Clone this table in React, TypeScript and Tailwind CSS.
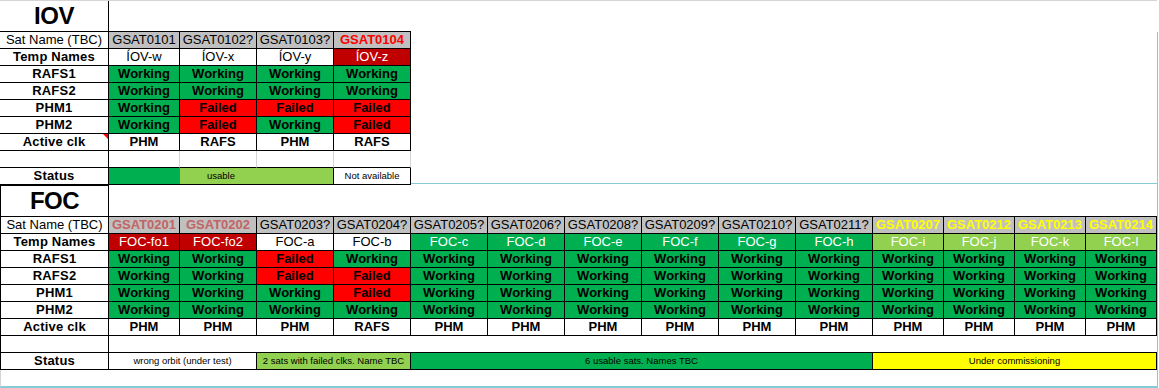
import type { ReactNode } from 'react'

type Tone = 'plain' | 'red' | 'rose' | 'yellow'
type Fill = 'white' | 'dred' | 'green' | 'lgreen'
type Sat = { name: string; tone: Tone; temp: string; fill: Fill; w: string; clocks: string[]; active: string }

const W = 'Working'
const F = 'Failed'

const toneClass: Record<Tone, string> = {
  plain: 'text-black',
  red: 'text-[#ff0000] font-bold',
  rose: 'text-[#c26464] font-bold',
  yellow: 'text-[#ffff00] font-bold',
}

const fillClass: Record<Fill, string> = {
  white: 'bg-white text-black',
  dred: 'bg-[#c00000] text-white',
  green: 'bg-[#00b050] text-white',
  lgreen: 'bg-[#92d050] text-white',
}

const IOV: Sat[] = [
  { name: 'GSAT0101', tone: 'plain', temp: 'ÍOV-w', fill: 'white', w: 'w-[71px]', clocks: [W, W, W, W], active: 'PHM' },
  { name: 'GSAT0102?', tone: 'plain', temp: 'ÍOV-x', fill: 'white', w: 'w-[77px]', clocks: [W, W, F, F], active: 'RAFS' },
  { name: 'GSAT0103?', tone: 'plain', temp: 'ÍOV-y', fill: 'white', w: 'w-[77px]', clocks: [W, W, F, W], active: 'PHM' },
  { name: 'GSAT0104', tone: 'red', temp: 'ÍOV-z', fill: 'dred', w: 'w-[77px]', clocks: [W, W, F, F], active: 'RAFS' },
]

const FOC: Sat[] = [
  { name: 'GSAT0201', tone: 'rose', temp: 'FOC-fo1', fill: 'dred', w: 'w-[71px]', clocks: [W, W, W, W], active: 'PHM' },
  { name: 'GSAT0202', tone: 'rose', temp: 'FOC-fo2', fill: 'dred', w: 'w-[77px]', clocks: [W, W, W, W], active: 'PHM' },
  { name: 'GSAT0203?', tone: 'plain', temp: 'FOC-a', fill: 'white', w: 'w-[77px]', clocks: [F, F, W, W], active: 'PHM' },
  { name: 'GSAT0204?', tone: 'plain', temp: 'FOC-b', fill: 'white', w: 'w-[77px]', clocks: [W, F, F, W], active: 'RAFS' },
  { name: 'GSAT0205?', tone: 'plain', temp: 'FOC-c', fill: 'green', w: 'w-[77px]', clocks: [W, W, W, W], active: 'PHM' },
  { name: 'GSAT0206?', tone: 'plain', temp: 'FOC-d', fill: 'green', w: 'w-[77px]', clocks: [W, W, W, W], active: 'PHM' },
  { name: 'GSAT0208?', tone: 'plain', temp: 'FOC-e', fill: 'green', w: 'w-[77px]', clocks: [W, W, W, W], active: 'PHM' },
  { name: 'GSAT0209?', tone: 'plain', temp: 'FOC-f', fill: 'green', w: 'w-[77px]', clocks: [W, W, W, W], active: 'PHM' },
  { name: 'GSAT0210?', tone: 'plain', temp: 'FOC-g', fill: 'green', w: 'w-[77px]', clocks: [W, W, W, W], active: 'PHM' },
  { name: 'GSAT0211?', tone: 'plain', temp: 'FOC-h', fill: 'green', w: 'w-[77px]', clocks: [W, W, W, W], active: 'PHM' },
  { name: 'GSAT0207', tone: 'yellow', temp: 'FOC-i', fill: 'lgreen', w: 'w-[71px]', clocks: [W, W, W, W], active: 'PHM' },
  { name: 'GSAT0212', tone: 'yellow', temp: 'FOC-j', fill: 'lgreen', w: 'w-[71px]', clocks: [W, W, W, W], active: 'PHM' },
  { name: 'GSAT0213', tone: 'yellow', temp: 'FOC-k', fill: 'lgreen', w: 'w-[71px]', clocks: [W, W, W, W], active: 'PHM' },
  { name: 'GSAT0214', tone: 'yellow', temp: 'FOC-l', fill: 'lgreen', w: 'w-[71px]', clocks: [W, W, W, W], active: 'PHM' },
]

const CLOCKS = ['RAFS1', 'RAFS2', 'PHM1', 'PHM2']

function Label({ children, bold = true, foc, note }: { children?: ReactNode; bold?: boolean; foc?: boolean; note?: boolean }) {
  return (
    <div
      className={`relative w-[109px] shrink-0 flex items-center justify-center border-r border-b border-black text-[13px] leading-[16px] ${
        bold ? 'font-bold tracking-[0.2px]' : ''
      } ${foc ? 'border-l' : ''}`}
    >
      {children}
      {note && (
        <svg className="absolute top-0 right-0" width="5" height="5" viewBox="0 0 5 5">
          <polygon points="0,0 5,0 5,5" fill="#ff0000" />
        </svg>
      )}
    </div>
  )
}

function Cell({ w, small, className = '', children }: { w: string; small?: boolean; className?: string; children?: ReactNode }) {
  return (
    <div
      className={`${w} shrink-0 flex items-center justify-center border-r border-b border-black leading-[16px] whitespace-nowrap overflow-hidden ${
        small ? 'text-[9.5px]' : 'text-[13px]'
      } ${className}`}
    >
      {children}
    </div>
  )
}

function Section({ sats, foc }: { sats: Sat[]; foc?: boolean }) {
  return (
    <>
      <div className="flex h-[17px]">
        <Label bold={false} foc={foc}>Sat Name (TBC)</Label>
        {sats.map((s) => (
          <Cell key={s.name} w={s.w} className={`bg-[#c0c0c0] ${toneClass[s.tone]}`}>
            {s.name}
          </Cell>
        ))}
      </div>
      <div className="flex h-[17px]">
        <Label foc={foc}>Temp Names</Label>
        {sats.map((s) => (
          <Cell key={s.name} w={s.w} className={fillClass[s.fill]}>
            {s.temp}
          </Cell>
        ))}
      </div>
      {CLOCKS.map((clk, i) => (
        <div key={clk} className="flex h-[17px]">
          <Label foc={foc}>{clk}</Label>
          {sats.map((s) => (
            <Cell key={s.name} w={s.w} className={`font-bold ${s.clocks[i] === W ? 'bg-[#00b050]' : 'bg-[#ff0000]'}`}>
              {s.clocks[i]}
            </Cell>
          ))}
        </div>
      ))}
      <div className="flex h-[17px]">
        <Label foc={foc} note={!foc}>Active clk</Label>
        {sats.map((s) => (
          <Cell key={s.name} w={s.w} className="bg-white font-bold">
            {s.active}
          </Cell>
        ))}
      </div>
    </>
  )
}

export default function App() {
  return (
    <div className="w-[1159px] h-[388px] bg-white overflow-hidden text-black font-['Liberation_Sans',Arial,sans-serif]">
      <div className="w-[1157px] h-px bg-[#d4d4d4]" />

      {/* IOV */}
      <div className="flex h-[31px]">
        <div className="w-[109px] flex items-center justify-center border-r border-b border-black text-[24px] font-bold tracking-[-0.5px] leading-none">
          IOV
        </div>
        <div className="w-[302px] border-b border-black" />
      </div>

      <div className="w-[1158px] border-r border-[#86cbd8]">
        <Section sats={IOV} />
        <div className="flex h-[17px]">
          <Label />
          {IOV.map((s) => (
            <div key={s.name} className={`${s.w} shrink-0 border-b border-b-black border-r border-r-[#d4d4d4]`} />
          ))}
        </div>
        <div className="flex h-[17px]">
          <Label>Status</Label>
          <Cell w="w-[225px]" small className="bg-[linear-gradient(to_right,#00b050_71px,#92d050_71px)]">
            usable
          </Cell>
          <Cell w="w-[77px]" small className="bg-white">
            Not available
          </Cell>
          <div className="flex-1 self-start h-[16px] border-b border-[#86cbd8]" />
        </div>

        {/* FOC */}
        <div className="flex h-[32px]">
          <div className="w-[109px] flex items-center justify-center border border-black text-[24px] font-bold tracking-[-0.5px] leading-none">
            FOC
          </div>
          <div className="w-[1048px] border-b border-black" />
        </div>
        <Section sats={FOC} foc />
        <div className="flex h-[17px]">
          <Label foc />
          <div className="w-[1048px] border-b border-black" />
        </div>
        <div className="flex h-[17px]">
          <Label foc>Status</Label>
          <Cell w="w-[148px]" small className="bg-white">
            wrong orbit (under test)
          </Cell>
          <Cell w="w-[154px]" small className="bg-[#92d050]">
            2 sats with failed clks. Name TBC
          </Cell>
          <Cell w="w-[462px]" small className="bg-[#00b050]">
            6 usable sats. Names TBC
          </Cell>
          <Cell w="w-[284px]" small className="bg-[#ffff00]">
            Under commissioning
          </Cell>
        </div>
        <div className="h-[18px] border-l border-l-[#d4d4d4] border-b-2 border-b-[#86cbd8]" />
      </div>
    </div>
  )
}
